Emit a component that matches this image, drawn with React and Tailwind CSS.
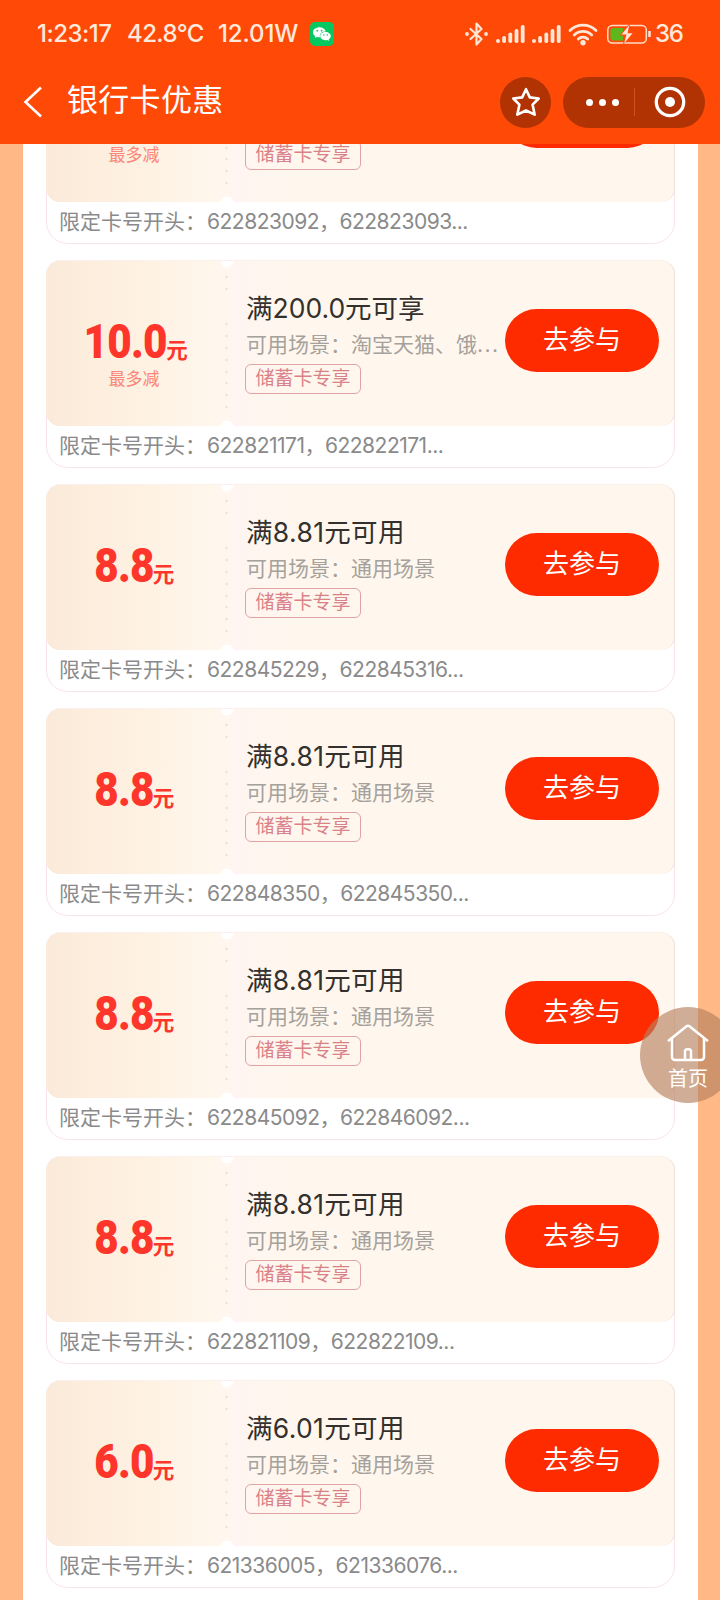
import React from 'react';

const coupons = [
    { id: 1, amount: '10.0', capped: true, title: '满200.0元可享', scene: '淘宝天猫、饿', more: true, cards: '622823092，622823093...', scrolled: true },
    { id: 2, amount: '10.0', capped: true, title: '满200.0元可享', scene: '淘宝天猫、饿', more: true, cards: '622821171，622822171...' },
    { id: 3, amount: '8.8', title: '满8.81元可用', scene: '通用场景', cards: '622845229，622845316...' },
    { id: 4, amount: '8.8', title: '满8.81元可用', scene: '通用场景', cards: '622848350，622845350...' },
    { id: 5, amount: '8.8', title: '满8.81元可用', scene: '通用场景', cards: '622845092，622846092...' },
    { id: 6, amount: '8.8', title: '满8.81元可用', scene: '通用场景', cards: '622821109，622822109...' },
    { id: 7, amount: '6.0', title: '满6.01元可用', scene: '通用场景', cards: '621336005，621336076...' },
];

const SignalIcon = () => (
    <svg width="29" height="20" viewBox="0 0 29 20" fill="#ffe6d6">
        <rect x="0" y="15" width="4" height="4" rx="2" />
        <rect x="6.2" y="12" width="3.8" height="7" rx="1.7" />
        <rect x="12.4" y="8.5" width="3.8" height="10.5" rx="1.7" />
        <rect x="18.6" y="5" width="3.8" height="14" rx="1.7" />
        <rect x="24.8" y="1" width="3.8" height="18" rx="1.7" />
    </svg>
);

const WeChatIcon = () => (
    <svg width="24" height="24" viewBox="0 0 24 24">
        <rect width="24" height="24" rx="5" fill="#05c860" />
        <path fill="#fff" d="M9.4 5.2c-3.6 0-6.4 2.3-6.4 5.1 0 1.6.9 3 2.3 3.9l-.5 1.7 2-1c.8.2 1.6.4 2.6.4h.6c-.1-.4-.2-.8-.2-1.2 0-2.6 2.5-4.6 5.7-4.6h.3c-.6-2.5-3.2-4.3-6.4-4.3z" />
        <path fill="#fff" d="M15.5 9.9c-3 0-5.3 1.9-5.3 4.2s2.3 4.2 5.3 4.2c.7 0 1.3-.1 1.9-.3l1.7.9-.4-1.5c1.3-.8 2.1-2 2.1-3.3 0-2.3-2.4-4.2-5.3-4.2z" />
        <g fill="#05c860">
            <circle cx="7.3" cy="8.7" r=".9" />
            <circle cx="11.6" cy="8.7" r=".9" />
            <circle cx="13.8" cy="12.9" r=".75" />
            <circle cx="17.3" cy="12.9" r=".75" />
        </g>
    </svg>
);

const StatusBar = () => (
    <div className="flex h-[67px] items-center pl-[37px] pr-[37px] text-[24px] font-medium text-[#ffe9dc]">
        <span className="w-[90px] whitespace-nowrap tracking-[-0.5px]">1:23:17</span>
        <span className="w-[91px] whitespace-nowrap tracking-[-0.6px]">42.8°C</span>
        <span className="w-[92px] whitespace-nowrap tracking-[-0.1px]">12.01W</span>
        <WeChatIcon />
        <div className="ml-auto flex items-center">
            <svg width="23" height="26" viewBox="0 0 23 26" fill="none" stroke="#ffe6d6" strokeWidth="2.2" strokeLinejoin="round" strokeLinecap="round">
                <path d="M5.5 8 16.5 18l-5 5.5v-21l5 5.5L5.500 18" />
                <circle cx="2" cy="13" r=".8" fill="#ffe6d6" />
                <circle cx="21" cy="13" r=".8" fill="#ffe6d6" />
            </svg>
            <span className="ml-2"><SignalIcon /></span>
            <span className="ml-[7px]"><SignalIcon /></span>
            <svg className="ml-[7px]" width="30" height="24" viewBox="0 0 30 24" fill="none" stroke="#ffe6d6" strokeWidth="2.8" strokeLinecap="round">
                <path d="M2 8.5a18.5 18.5 0 0 1 26 0" />
                <path d="M6.3 13a12.3 12.3 0 0 1 17.4 0" />
                <path d="M10.3 17a6.7 6.7 0 0 1 9.4 0" />
                <circle cx="15" cy="20.7" r="1.3" fill="#ffe6d6" />
            </svg>
            <svg className="ml-[8px]" width="46" height="22" viewBox="0 0 46 22" fill="none">
                <rect x="1.8" y="2.5" width="38.5" height="17.5" rx="4.5" stroke="#ffdcc8" strokeWidth="1.5" />
                <path d="M7 5h10v12.5H7a2.5 2.5 0 0 1-2.5-2.5V7.5A2.5 2.5 0 0 1 7 5z" fill="#5cb81c" />
                <path d="M24 0 13.5 12.5h5.5L17 22 28 9.5h-5.5z" fill="#ff4a07" />
                <path d="M23.3 2 15.5 11.5h5L18 20.5 26.5 10.3h-5z" fill="#ffe6d6" />
                <path d="M43.5 8v6" stroke="#ffe6d6" strokeWidth="2.5" />
            </svg>
            <span className="ml-[3px] w-[28px] whitespace-nowrap tracking-[-1.2px]">36</span>
        </div>
    </div>
);

const Header = () => (
    <header className="h-36 flex-shrink-0 bg-[#ff4a07] text-white">
        <StatusBar />
        <div className="flex h-[70px] items-center pl-[23px] pr-[15px]">
            <svg width="20" height="32" viewBox="0 0 20 32" fill="none" stroke="#fff" strokeWidth="2.6">
                <path d="M18 1.5 2.5 16 18 30.5" />
            </svg>
            <h1 className="ml-[24px] pb-[5px] text-[31px] leading-none tracking-[0.3px]">银行卡优惠</h1>
            <button className="ml-auto flex h-[51px] w-[51px] items-center justify-center rounded-full bg-[#b13304]">
                <svg width="30" height="30" viewBox="0 0 30 30" fill="none" stroke="#fff" strokeWidth="2.6" strokeLinejoin="round">
                    <path d="M15 2.2 18.8 10.4 27.7 11.5 21.6 17.7 23.7 27.7 15 23.5 6.3 27.7 8.4 17.7 2.3 11.5 11.2 10.4z" />
                </svg>
            </button>
            <div className="ml-3 flex h-[51px] w-[142px] items-center rounded-full bg-[#b13304]">
                <div className="flex w-[71px] items-center gap-[6px] pl-[23px]">
                    <i className="h-[7px] w-[7px] rounded-full bg-white" />
                    <i className="h-[7px] w-[7px] rounded-full bg-white" />
                    <i className="h-[7px] w-[7px] rounded-full bg-white" />
                </div>
                <div className="h-7 w-px bg-[#d0521f]" />
                <svg className="ml-[19px]" width="32" height="32" viewBox="0 0 32 32" fill="none">
                    <circle cx="16" cy="16" r="13.7" stroke="#fff" strokeWidth="3.3" />
                    <circle cx="16" cy="16" r="5" fill="#fff" />
                </svg>
            </div>
        </div>
    </header>
);

const dots = [16, 28, 63, 75, 87, 99, 111, 122, 134, 146];

// Perforated line between the amount and the details
const Perforation = () => (
    <svg className="absolute left-[173px] top-0" width="16" height="166" viewBox="0 0 16 166">
        <circle cx="8" cy="0" r="6.5" fill="#fff" />
        <circle cx="8" cy="166" r="6.5" fill="#fff" />
        {dots.map((y) => (
            <circle key={y} cx="7.5" cy={y} r="1.2" fill="#f3dfd8" />
        ))}
    </svg>
);

const CouponCard = ({ coupon }) => {
    // texts that have already gone under the header
    const hidden = coupon.scrolled ? 'invisible' : '';

    return (
        <div className="h-[208px] w-[629px] rounded-[22px] border border-[#fae3e8] bg-white">
            <div className="relative -mx-px -mt-px flex h-[166px] rounded-[14px] border-r border-t border-r-[#f0e0da] border-t-[#fbf0ea] bg-[#fff7ed]">
                <div className="flex w-[181px] flex-col items-center rounded-l-[14px] bg-gradient-to-r from-[#fbeada] via-[#fef1e1] to-[#fff7ee] pt-[52px] text-[#fd352b]">
                    <div className={`flex items-baseline pr-[7px] leading-[58px] ${hidden}`}>
                        <span className="-ml-[6px] inline-block origin-right scale-x-[0.88] font-[Roboto] text-[48px] font-black tracking-[-0.8px]">{coupon.amount}</span>
                        <span className="-ml-px text-[21.5px] font-bold">元</span>
                    </div>
                    {coupon.capped && <p className="-mt-[11px] pr-[5px] text-[17px] leading-[22px] text-[#fb8577]">最多减</p>}
                </div>
                <div className="flex min-w-0 flex-1 flex-col items-start bg-gradient-to-r from-[#fff5f1] to-[#fff7ed] to-30% pl-[18px] pt-[30px]">
                    <h2 className={`pl-px text-[26.5px] leading-[34px] text-[#33302d] ${coupon.capped ? 'tracking-[0px]' : 'tracking-[0.35px]'} ${hidden}`}>{coupon.title}</h2>
                    <p className={`mt-[7px] w-[262px] whitespace-nowrap pl-px text-[21px] leading-[26px] text-[#a5a19c] ${hidden}`}>
                        可用场景：{coupon.scene}
                        {coupon.more && <span className="tracking-[1.5px]">...</span>}
                    </p>
                    <span className="mt-[6px] h-[30px] rounded-[6px] border border-[#e0a3a6] px-[9.5px] text-[19px] leading-[27px] text-[#d98289]">储蓄卡专享</span>
                </div>
                <button className="mr-[15px] mt-[48px] h-[63px] w-[154px] rounded-full bg-[#ff2b00] pb-[3px] text-[26px] text-white">
                    <span className={hidden}>去参与</span>
                </button>
                <Perforation />
            </div>
            <p className="pl-[12px] pt-[5px] text-[21px] leading-[30px] text-[#8a8a8a]">
                限定卡号开头：<span className="ml-px tracking-[-0.5px]">{coupon.cards}</span>
            </p>
        </div>
    );
};

const HomeButton = () => (
    <button className="absolute left-[640px] top-[1007px] flex h-24 w-24 flex-col items-center rounded-full bg-[#b78160]/65 pt-[17px] text-white">
        <svg width="42" height="38" viewBox="0 0 42 38" fill="none" stroke="#fff" strokeWidth="2.5" strokeLinejoin="round" strokeLinecap="round">
            <path d="M1.8 16.5 19.5 2.3a2.4 2.4 0 0 1 3 0L40.2 16.5" />
            <path d="M5 14.5V33a3 3 0 0 0 3 3h26a3 3 0 0 0 3-3V14.5" />
            <path d="M18 35.5v-8a2.3 2.3 0 0 1 2.3-2.3h1.4a2.3 2.3 0 0 1 2.3 2.3v8" />
        </svg>
        <span className="mt-[3px] text-[20px] leading-[28px]">首页</span>
    </button>
);

const App = () => {
    return (
        <div className="relative flex h-[1600px] w-[720px] flex-col overflow-hidden bg-[#ffb886] font-[Inter,'Noto_Sans_CJK_SC',sans-serif]">
            <Header />
            <main className="mx-[23px] min-h-0 w-[675px] flex-1 overflow-hidden bg-white">
                <div className="-mt-[108px] flex flex-col gap-4 pl-[23px]">
                    {coupons.map((coupon) => (
                        <CouponCard key={coupon.id} coupon={coupon} />
                    ))}
                </div>
            </main>
            <HomeButton />
        </div>
    );
};

export default App;
